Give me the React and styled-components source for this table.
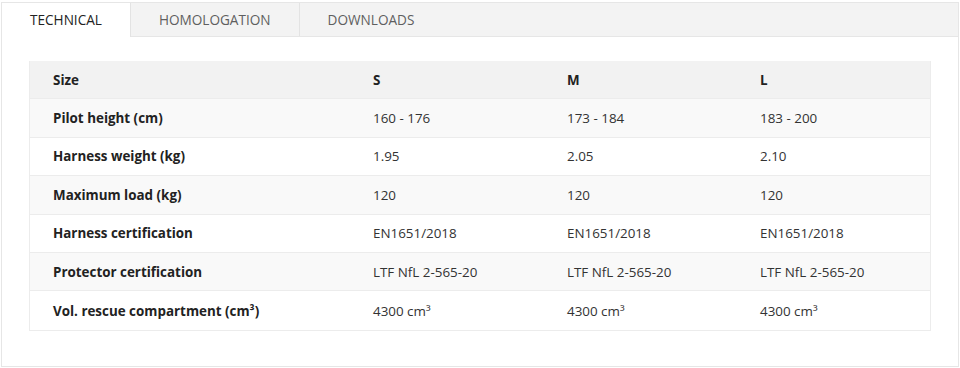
import React, {useState} from "react"
import styled, {createGlobalStyle} from "styled-components"

const GlobalStyle = createGlobalStyle`
  html, body {
    margin: 0;
    padding: 0;
    background: #ffffff;
  }
  body {
    font-family: "Open Sans", "Noto Sans", sans-serif;
    color: #333333;
  }
`

const StyledPanel = styled.section`
  margin: 2px 1px 0 1px;
  height: 363px;
  border: 1px solid #e6e6e6;
  background: #ffffff;
  display: flex;
  flex-direction: column;
`

const StyledTabBar = styled.nav`
  display: flex;
  height: 33px;
  background: #f3f3f3;
  border-bottom: 1px solid #e6e6e6;
`

const StyledTab = styled.button`
  appearance: none;
  border: 0;
  border-right: 1px solid ${({$last}) => ($last ? "transparent" : "#e3e3e3")};
  margin: 0 0 ${({$active}) => ($active ? "-1px" : "0")};
  padding: 0 28px 1px;
  height: ${({$active}) => ($active ? "34px" : "33px")};
  background: ${({$active}) => ($active ? "#ffffff" : "transparent")};
  color: ${({$active}) => ($active ? "#222222" : "#5f5f5f")};
  font-family: inherit;
  font-size: 13.6px;
  text-transform: uppercase;
  cursor: pointer;
`

const StyledContent = styled.div`
  padding: 24px 27px 0 27px;
`

const StyledTable = styled.div`
  width: 900px;
  border: 1px solid #ececec;
  border-top: 0;
`

const StyledRow = styled.div`
  display: grid;
  grid-template-columns: 320px 194px 193px 193px;
  height: 37.4px;
  align-items: center;
  background: ${({$header, $odd}) => ($header ? "#f2f2f2" : $odd ? "#f9f9f9" : "#ffffff")};
  border-bottom: 1px solid #ececec;
  font-size: 13.4px;
  &:last-child {
    border-bottom: 0;
    height: 38.4px;
  }
`

const StyledCell = styled.div`
  padding: 0 23px;
  font-weight: ${({$bold}) => ($bold ? 700 : 400)};
  color: ${({$bold}) => ($bold ? "#222222" : "#333333")};
  white-space: nowrap;
`

const tabs = ["Technical", "Homologation", "Downloads"]

const rows = [
  ["Pilot height (cm)", "160 - 176", "173 - 184", "183 - 200"],
  ["Harness weight (kg)", "1.95", "2.05", "2.10"],
  ["Maximum load (kg)", "120", "120", "120"],
  ["Harness certification", "EN1651/2018", "EN1651/2018", "EN1651/2018"],
  ["Protector certification", "LTF NfL 2-565-20", "LTF NfL 2-565-20", "LTF NfL 2-565-20"],
  ["Vol. rescue compartment (cm³)", "4300 cm³", "4300 cm³", "4300 cm³"],
]

const App = () => {
  const [active, setActive] = useState(0)

  return (
    <>
      <GlobalStyle />
      <StyledPanel>
        <StyledTabBar>
          {tabs.map((tab, i) => (
            <StyledTab
              key={tab}
              $active={i === active}
              $last={i === tabs.length - 1}
              onClick={() => setActive(i)}
            >
              {tab}
            </StyledTab>
          ))}
        </StyledTabBar>
        <StyledContent>
          <StyledTable>
            <StyledRow $header>
              <StyledCell $bold>Size</StyledCell>
              <StyledCell $bold>S</StyledCell>
              <StyledCell $bold>M</StyledCell>
              <StyledCell $bold>L</StyledCell>
            </StyledRow>
            {rows.map(([label, ...values], i) => (
              <StyledRow key={label} $odd={i % 2 === 0}>
                <StyledCell $bold>{label}</StyledCell>
                {values.map((v, j) => (
                  <StyledCell key={j}>{v}</StyledCell>
                ))}
              </StyledRow>
            ))}
          </StyledTable>
        </StyledContent>
      </StyledPanel>
    </>
  )
}

export default App
